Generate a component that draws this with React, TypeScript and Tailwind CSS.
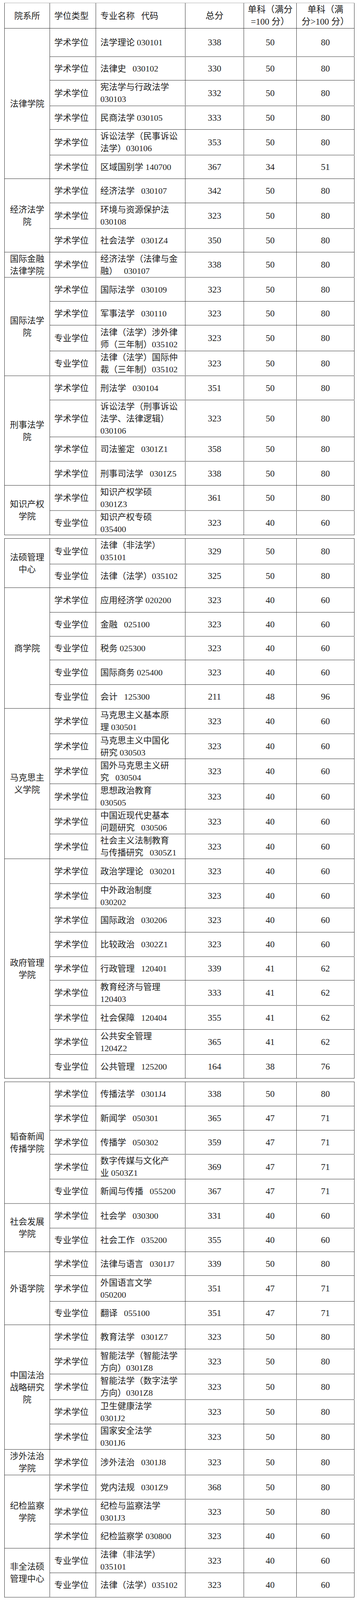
import React from "react";

type Row = { t: "学" | "专"; m: string[]; s: string; a: string; b: string; h: number; g?: boolean };
type Group = { d: string[]; g?: boolean; rows: Row[] };

const N = "\u00a0";
const W = "\u00a0\u00a0\u00a0";

// The browser window is 4096px tall, so the reference's 4352px are fitted into it.
const K = 4096 / 4352;
const S = (y: number) => Math.round(y * K);
const LH = 31;

const r = (t: "学" | "专", m: string[], s: string, a: string, b: string, h: number, g?: boolean): Row => ({ t, m, s, a, b, h, g });

const T1: Group[] = [
  {
    d: ["法律学院"],
    rows: [
      r("学", ["法学理论" + N + "030101"], "338", "50", "80", 77),
      r("学", ["法律史" + W + "030102"], "330", "50", "80", 65, true),
      r("学", ["宪法学与行政法学", "030103"], "332", "50", "80", 69),
      r("学", ["民商法学" + N + "030105"], "333", "50", "80", 65, true),
      r("学", ["诉讼法学（民事诉讼", "法学）030106"], "353", "50", "80", 69),
      r("学", ["区域国别学" + N + "140700"], "367", "34", "51", 65, true),
    ],
  },
  {
    d: ["经济法学", "院"],
    rows: [
      r("学", ["经济法学" + W + "030107"], "342", "50", "80", 65),
      r("学", ["环境与资源保护法", "030108"], "323", "50", "80", 69),
      r("学", ["社会法学" + W + "0301Z4"], "350", "50", "80", 65, true),
    ],
  },
  {
    d: ["国际金融", "法律学院"],
    rows: [r("学", ["经济法学（法律与金", "融）" + W + "030107"], "338", "50", "80", 68)],
  },
  {
    d: ["国际法学", "院"],
    g: true,
    rows: [
      r("学", ["国际法学" + W + "030109"], "323", "50", "80", 66),
      r("学", ["军事法学" + W + "030110"], "323", "50", "80", 65),
      r("专", ["法律（法学）涉外律", "师（三年制）035102"], "323", "50", "80", 70),
      r("专", ["法律（法学）国际仲", "裁（三年制）035102"], "323", "50", "80", 67),
    ],
  },
  {
    d: ["刑事法学", "院"],
    g: true,
    rows: [
      r("学", ["刑法学" + W + "030104"], "351", "50", "80", 66),
      r("学", ["诉讼法学（刑事诉讼", "法学、法律逻辑）", "030106"], "323", "50", "80", 101, true),
      r("学", ["司法鉴定" + W + "0301Z1"], "358", "50", "80", 66),
      r("学", ["刑事司法学" + W + "0301Z5"], "338", "50", "80", 66, true),
    ],
  },
  {
    d: ["知识产权", "学院"],
    rows: [
      r("学", ["知识产权学硕", "0301Z3"], "361", "50", "80", 68),
      r("专", ["知识产权专硕", "035400"], "323", "40", "60", 67, true),
    ],
  },
];

const T2: Group[] = [
  {
    d: ["法硕管理", "中心"],
    rows: [
      r("专", ["法律（非法学）", "035101"], "329", "50", "80", 69),
      r("专", ["法律（法学）035102"], "325", "50", "80", 65, true),
    ],
  },
  {
    d: ["商学院"],
    rows: [
      r("学", ["应用经济学" + N + "020200"], "323", "40", "60", 67),
      r("专", ["金融" + W + "025100"], "323", "40", "60", 65),
      r("专", ["税务" + N + "025300"], "323", "40", "60", 65, true),
      r("专", ["国际商务" + N + "025400"], "323", "40", "60", 66),
      r("专", ["会计" + W + "125300"], "211", "48", "96", 65),
    ],
  },
  {
    d: ["马克思主", "义学院"],
    rows: [
      r("学", ["马克思主义基本原", "理" + N + "030501"], "323", "40", "60", 69),
      r("学", ["马克思主义中国化", "研究" + N + "030503"], "323", "40", "60", 68),
      r("学", ["国外马克思主义研", "究" + W + "030504"], "323", "40", "60", 68),
      r("学", ["思想政治教育", "030505"], "323", "40", "60", 69),
      r("学", ["中国近现代史基本", "问题研究" + W + "030506"], "323", "40", "60", 67),
      r("学", ["社会主义法制教育", "与传播研究" + W + "0305Z1"], "323", "40", "60", 68, true),
    ],
  },
  {
    d: ["政府管理", "学院"],
    rows: [
      r("学", ["政治学理论" + W + "030201"], "323", "40", "60", 67),
      r("学", ["中外政治制度", "030202"], "323", "40", "60", 67, true),
      r("学", ["国际政治" + W + "030206"], "323", "40", "60", 66),
      r("学", ["比较政治" + W + "0302Z1"], "323", "40", "60", 66),
      r("学", ["行政管理" + W + "120401"], "339", "41", "62", 65, true),
      r("学", ["教育经济与管理", "120403"], "333", "41", "62", 68),
      r("学", ["社会保障" + W + "120404"], "355", "41", "62", 66, true),
      r("学", ["公共安全管理", "1204Z2"], "365", "41", "62", 68),
      r("专", ["公共管理" + W + "125200"], "164", "38", "76", 65),
    ],
  },
];

const T3: Group[] = [
  {
    d: ["韬奋新闻", "传播学院"],
    rows: [
      r("学", ["传播法学" + W + "0301J4"], "338", "50", "80", 66),
      r("学", ["新闻学" + W + "050301"], "365", "47", "71", 66),
      r("学", ["传播学" + W + "050302"], "359", "47", "71", 65),
      r("学", ["数字传媒与文化产", "业" + N + "0503Z1"], "369", "47", "71", 68, true),
      r("专", ["新闻与传播" + W + "055200"], "367", "47", "71", 66),
    ],
  },
  {
    d: ["社会发展", "学院"],
    g: true,
    rows: [
      r("学", ["社会学" + W + "030300"], "331", "40", "60", 66),
      r("专", ["社会工作" + W + "035200"], "355", "40", "60", 65, true),
    ],
  },
  {
    d: ["外语学院"],
    rows: [
      r("学", ["法律与语言" + W + "0301J7"], "339", "50", "80", 65),
      r("学", ["外国语言文学", "050200"], "351", "47", "71", 70),
      r("专", ["翻译" + W + "055100"], "351", "47", "71", 64),
    ],
  },
  {
    d: ["中国法治", "战略研究", "院"],
    rows: [
      r("学", ["教育法学" + W + "0301Z7"], "323", "50", "80", 66),
      r("学", ["智能法学（智能法学", "方向）0301Z8"], "323", "50", "80", 68),
      r("学", ["智能法学（数字法学", "方向）0301Z8"], "323", "50", "80", 69),
      r("学", ["卫生健康法学", "0301J2"], "323", "50", "80", 67, true),
      r("学", ["国家安全法学", "0301J6"], "323", "50", "80", 69),
    ],
  },
  {
    d: ["涉外法治", "学院"],
    rows: [r("学", ["涉外法治" + W + "0301J8"], "323", "50", "80", 69)],
  },
  {
    d: ["纪检监察", "学院"],
    g: true,
    rows: [
      r("学", ["党内法规" + W + "0301Z9"], "368", "50", "80", 66),
      r("学", ["纪检与监察法学", "0301J3"], "323", "50", "80", 68, true),
      r("学", ["纪检监察学" + N + "030800"], "323", "40", "60", 66),
    ],
  },
  {
    d: ["非全法硕", "管理中心"],
    rows: [
      r("专", ["法律（非法学）", "035101"], "323", "40", "60", 67),
      r("专", ["法律（法学）035102"], "323", "40", "60", 65),
    ],
  },
];

function Lines({ lines, center }: { lines: string[]; center?: boolean }) {
  return (
    <div className={center ? "text-center" : "text-left"}>
      {lines.map((l, i) => (
        <div key={i} className="whitespace-nowrap leading-[31px]">
          {l}
        </div>
      ))}
    </div>
  );
}

const c1 = "w-[116px] shrink-0 border-r border-r-[#333] flex items-center justify-center";
const c2 = "w-[118px] shrink-0 border-r border-r-[#333] flex items-center pl-[11px] whitespace-nowrap leading-[31px]";
const c3 = "w-[229px] shrink-0 border-r border-r-[#333] flex items-center pl-[11px]";
const c4 = "w-[150px] shrink-0 border-r border-r-[#333] flex items-center justify-center text-[23px] leading-[31px]";
const c5 = "w-[135px] shrink-0 border-r border-r-[#333] flex items-center justify-center text-[23px] leading-[31px]";
const c6 = "w-[148px] shrink-0 border-r border-r-[#333] flex items-center justify-center text-[23px] leading-[31px]";

function GroupBlock({ g, first, top }: { g: Group; first: boolean; top: number }) {
  const gbw = first ? 1 : g.g ? 2 : 1;
  const gcls = first ? "" : g.g ? "border-t-2 border-t-[#9a9a9a]" : "border-t border-t-[#333]";
  let y = top;
  return (
    <div className={`flex ${gcls}`}>
      <div className={c1}>
        <Lines lines={g.d} center />
      </div>
      <div className="flex flex-col w-[780px]">
        {g.rows.map((row, ri) => {
          const t0 = y;
          const t1 = y + row.h;
          y = t1;
          const h = S(t1) - S(t0) - (ri === 0 ? gbw : 0);
          const rcls = ri === 0 ? "" : row.g ? "border-t-2 border-t-[#9a9a9a]" : "border-t border-t-[#333]";
          return (
            <div key={ri} className={`flex ${rcls}`} style={{ height: h }}>
              <div className={c2}>{row.t === "学" ? "学术学位" : "专业学位"}</div>
              <div className={c3}>
                <Lines lines={row.m} />
              </div>
              <div className={c4}>{row.s}</div>
              <div className={c5}>{row.a}</div>
              <div className={c6}>{row.b}</div>
            </div>
          );
        })}
      </div>
    </div>
  );
}

function Table({
  groups,
  start,
  header,
  topCls,
  bottomCls,
  marginTop,
}: {
  groups: Group[];
  start: number;
  header?: boolean;
  topCls: string;
  bottomCls: string;
  marginTop: number;
}) {
  let y = start;
  const headerH = S(start + 69) - S(start) - 1;
  if (header) y = start + 69;
  const tops: number[] = [];
  groups.forEach((g) => {
    tops.push(y);
    g.rows.forEach((row) => (y += row.h));
  });
  return (
    <div className={`w-[897px] border-l border-l-[#333] ${topCls} ${bottomCls}`} style={{ marginTop }}>
      {header && (
        <div className="flex" style={{ height: headerH }}>
          <div className={c1}>院系所</div>
          <div className={c2}>学位类型</div>
          <div className={`${c3} whitespace-nowrap`}>专业名称{W}代码</div>
          <div className={`${c4} text-[22px]`}>总分</div>
          <div className={`${c5} text-[22px]`}>
            <Lines lines={["单科（满分", "=100" + N + "分）"]} center />
          </div>
          <div className={`${c6} text-[22px]`}>
            <Lines lines={["单科（满", "分>100" + N + "分）"]} center />
          </div>
        </div>
      )}
      {groups.map((g, i) => (
        <GroupBlock key={i} g={g} first={!header && i === 0} top={tops[i]} />
      ))}
    </div>
  );
}

export default function App() {
  return (
    <div
      className="bg-white w-[917px] pl-[11px] text-[22px] text-[#222] font-['Liberation_Serif','Noto_Sans_CJK_SC',serif]"
      style={{ paddingTop: S(7), height: S(4352) }}
    >
      <Table
        groups={T1}
        start={7}
        header
        topCls="border-t border-t-[#aaa]"
        bottomCls="border-b border-b-[#333]"
        marginTop={0}
      />
      <Table
        groups={T2}
        start={1464}
        topCls="border-t border-t-[#333]"
        bottomCls="border-b border-b-[#333]"
        marginTop={S(1464) - S(1455) - 1}
      />
      <Table
        groups={T3}
        start={2942}
        topCls="border-t border-t-[#333]"
        bottomCls="border-b-2 border-b-[#9a9a9a]"
        marginTop={S(2942) - S(2933) - 1}
      />
    </div>
  );
}
